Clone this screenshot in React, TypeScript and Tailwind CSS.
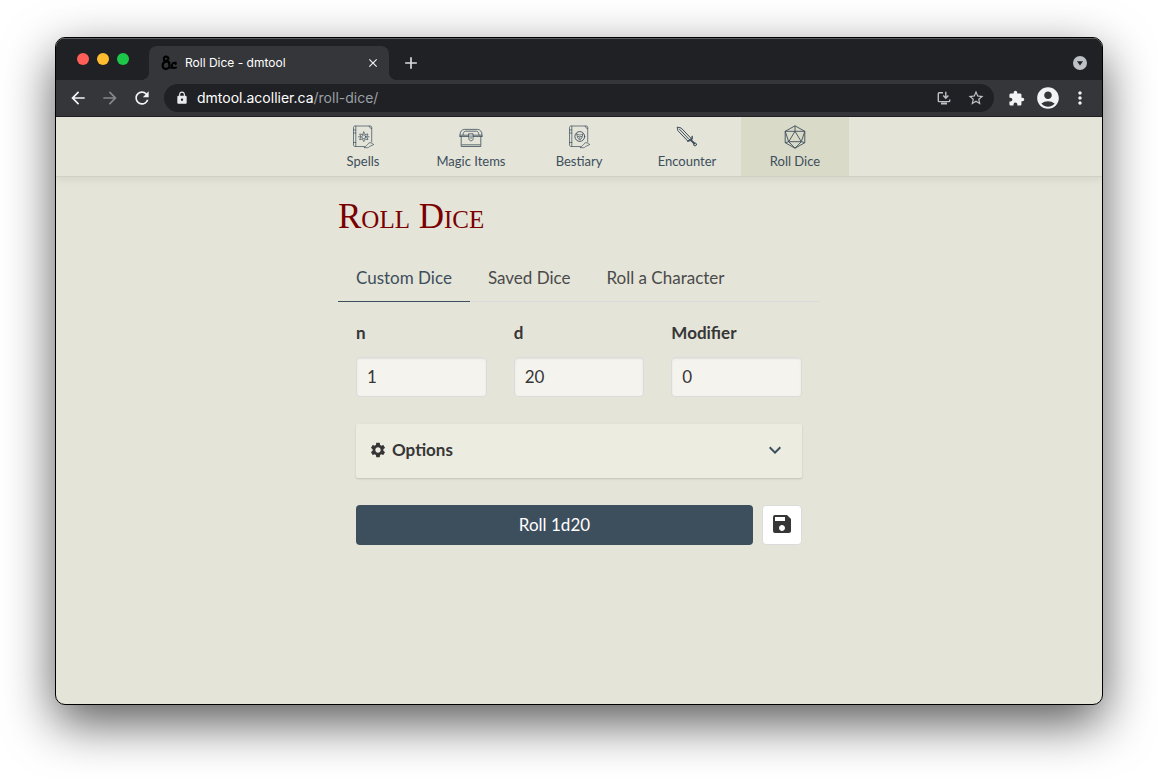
import { useState } from "react";
import type { ReactNode } from "react";
import {
  MdAccountCircle,
  MdAdd,
  MdArrowBack,
  MdArrowForward,
  MdClose,
  MdExpandMore,
  MdExtension,
  MdLock,
  MdMoreVert,
  MdRefresh,
  MdSave,
  MdSettings,
  MdStarBorder,
} from "react-icons/md";

function FaviconAmpersand() {
  return (
    <svg viewBox="0 0 16 16" className="h-4 w-4" fill="none" stroke="#000" strokeLinecap="round" strokeLinejoin="round" aria-hidden="true">
      <path strokeWidth="2.2" d="M3 4.600C2.300 2.600 3.700 1.500 5.300 1.600 7 1.700 7.800 3 7.200 4.400 6.700 5.600 5 6.300 3.700 7 2.200 7.800 1.400 9.400 1.700 11.200c.4 2.400 2.800 3.300 4.800 2.400 2.200-1 2.600-3.400 1.400-5" />
      <path strokeWidth="2" d="M3.200 5.200C5 6.600 7 6.400 8.500 7.600" />
      <path strokeWidth="2" d="M14.600 8.400C12.900 7.200 11 8.200 10.900 10.200c-.1 2.400 1.900 3.700 4.100 2.300M14.700 7.500v1.600" />
      <path strokeWidth="1.500" d="M8 12.500l3 .6" />
    </svg>
  );
}

function InstallIcon() {
  return (
    <svg viewBox="0 0 14 14" className="h-3.5 w-3.5" fill="none" stroke="currentColor" strokeWidth="1.4" aria-hidden="true">
      <path d="M6 1.700H2.200A.9.9 0 0 0 1.300 2.600v7.100c0 .5.4.9.9.9h9.600c.5 0 .9-.4.900-.9V8.500" />
      <path d="M8.800.8v6M6.200 4.600l2.600 2.600 2.600-2.600" />
      <path d="M4 12.400h6" strokeWidth="2" />
    </svg>
  );
}

function BookBase({ children }: { children: ReactNode }) {
  return (
    <svg viewBox="0 0 24 24" className="h-6 w-6" fill="none" stroke="currentColor" strokeWidth="0.7" strokeLinecap="round" strokeLinejoin="round" aria-hidden="true">
      <path d="M13.500 21.500H4.200c-1 0-1.700-.6-1.700-1.500V2.500c0-.9.6-1.500 1.500-1.500h15.400c.8 0 1.300.5 1.300 1.300v14.600" />
      <path d="M4.800 1.200v20.200M2.500 5h2.300M2.500 8h2.300M2.500 17.500h2.300" />
      <path d="M18.300 1.200c0 1.300.9 2.200 2.400 2.200" />
      <path d="M13.600 22.600c.6-1.500 1.500-1.600 2.300-2.300 1-.9 1.300-2.400 3-2.600 1.800-.2 2.200 1 3.900 1.800-1.500.4-2 1.300-3.300 1.500-1.200.2-1.300 1.500-2.700 1.700-1.200.2-2-.3-3.200-.1z" />
      {children}
    </svg>
  );
}

function SpellsIcon() {
  return (
    <BookBase>
      <path d="M12.800 7l1.300 2.500 2.900-.5-1.400 2.800 1.400 2.800-2.900-.5-1.300 2.500-1.300-2.500-2.900.5 1.400-2.800L8.600 9l2.900.5z" />
      <circle cx="12.800" cy="11.800" r="1.900" />
      <path d="M7.500 11.800h2.300M15.800 11.800h2.300" />
    </BookBase>
  );
}

function BestiaryIcon() {
  return (
    <BookBase>
      <circle cx="12.800" cy="11.500" r="4.900" strokeWidth="0.9" />
      <path d="M9.800 9c.6 1.300.2 2.800 1 4l2 2.200 2-2.200c.8-1.200.4-2.700 1-4-1.200.1-1.500 1-3 1s-1.800-.9-3-1zM11 11.500h1M13.600 11.500h1M12.800 12v1.600" />
    </BookBase>
  );
}

function ChestIcon() {
  return (
    <svg viewBox="0 0 24 24" className="h-6 w-6" fill="none" stroke="currentColor" strokeWidth="0.8" strokeLinecap="round" strokeLinejoin="round" aria-hidden="true">
      <path d="M1 11.500V10C1 6.700 2.800 4.400 5.500 4.400h13c2.700 0 4.500 2.300 4.500 5.600v1.500" />
      <path d="M2.200 11.500v10h19.600v-10M4 10c.2-2 1-3.800 2.300-3.800h11.400c1.300 0 2.100 1.800 2.300 3.800M3 19.800h18" />
      <path d="M1 10.200h9M14 10.200h9M1 11.500h9M14 11.500h9" />
      <path d="M9.900 8.800h4.200v4.900c0 1.300-.9 2.100-2.100 2.100s-2.100-.8-2.100-2.100zM12 10.800v2.700" />
    </svg>
  );
}

function SwordIcon() {
  return (
    <svg viewBox="0 0 24 24" className="h-6 w-6" fill="none" stroke="currentColor" strokeWidth="1" strokeLinecap="round" strokeLinejoin="round" aria-hidden="true">
      <path d="M2.500 2.200l3.700.8 9.700 10.200-3 3L3.200 6z" />
      <path d="M4.500 4.200l9.300 10" />
      <path strokeWidth="1.500" d="M17.200 11.600c.3 1.500-.1 2.300-1 3.200s-1.900 1.300-3.500 1.200" />
      <path strokeWidth="1.900" d="M16 15.200l3.300 3.300" />
      <circle cx="20" cy="19.400" r="1.500" />
    </svg>
  );
}

function D20Icon() {
  return (
    <svg viewBox="0 0 24 24" className="h-6 w-6" fill="none" stroke="currentColor" strokeWidth="0.9" strokeLinejoin="round" aria-hidden="true">
      <path d="M12 .8l9.800 5.500v11.400L12 23.200l-9.800-5.500V6.300z" />
      <path d="M12 6.300L5.700 16.700h12.600zM12 .8v5.500M2.200 6.300H21.800M2.200 6.300l3.500 10.400M21.800 6.300l-3.500 10.400M2.200 17.700l3.500-1M21.800 17.700l-3.500-1M5.700 16.700L12 23.200l6.300-6.500" />
    </svg>
  );
}

const navItems = [
  { label: "Spells", href: "#spells", icon: <SpellsIcon /> },
  { label: "Magic Items", href: "#magic-items", icon: <ChestIcon /> },
  { label: "Bestiary", href: "#bestiary", icon: <BestiaryIcon /> },
  { label: "Encounter", href: "#encounter", icon: <SwordIcon /> },
  { label: "Roll Dice", href: "#roll-dice", icon: <D20Icon /> },
];

const tabs = ["Custom Dice", "Saved Dice", "Roll a Character"];

function ToolButton({ label, children, className = "text-[#f1f3f4]" }: { label: string; children: ReactNode; className?: string }) {
  return (
    <button type="button" aria-label={label} className={`flex h-7 w-8 shrink-0 items-center justify-center ${className}`}>
      {children}
    </button>
  );
}

function TabStrip() {
  return (
    <div className="flex h-[42px] items-end border-t border-[#5a5b5e] bg-[#202124]">
      <div className="flex h-full items-center gap-2 pb-0.5 pl-[21px]">
        <button type="button" aria-label="Close window" className="h-3 w-3 rounded-full bg-[#ff5f57]" />
        <button type="button" aria-label="Minimize window" className="h-3 w-3 rounded-full bg-[#febc2e]" />
        <button type="button" aria-label="Zoom window" className="h-3 w-3 rounded-full bg-[#1dc749]" />
      </div>
      <div className="relative ml-5 flex h-[34px] w-60 items-center rounded-t-lg bg-[#35363a] pr-2 pl-3">
        <span className="absolute bottom-0 -left-2 h-2 w-2 bg-[radial-gradient(circle_at_top_left,#202124_8px,#35363a_8px)]" />
        <span className="absolute -right-2 bottom-0 h-2 w-2 bg-[radial-gradient(circle_at_top_right,#202124_8px,#35363a_8px)]" />
        <FaviconAmpersand />
        <span className="ml-2 flex-1 text-xs text-white">Roll Dice - dmtool</span>
        <button type="button" aria-label="Close tab" className="flex h-4 w-4 items-center justify-center text-[#f1f3f4]">
          <MdClose size={14} />
        </button>
      </div>
      <button type="button" aria-label="New tab" className="ml-3 flex h-[34px] w-5 items-center justify-center text-[#dadce0]">
        <MdAdd size={20} />
      </button>
      <button type="button" aria-label="Search tabs" className="mr-[15px] mb-[10px] ml-auto h-3.5 w-3.5 text-[#bdc1c6]">
        <svg viewBox="0 0 14 14" className="h-3.5 w-3.5" aria-hidden="true">
          <circle cx="7" cy="7" r="7" fill="currentColor" />
          <path d="M4 5.200h6L7 9.400z" fill="#202124" />
        </svg>
      </button>
    </div>
  );
}

function Toolbar() {
  return (
    <div className="flex h-[37px] items-center border-b border-[#202124] bg-[#35363a] px-1.5">
      <ToolButton label="Back"><MdArrowBack size={20} /></ToolButton>
      <ToolButton label="Forward" className="text-[#86878a]"><MdArrowForward size={20} /></ToolButton>
      <ToolButton label="Reload"><MdRefresh size={20} /></ToolButton>
      <div className="mx-1.5 flex h-7 min-w-0 flex-1 items-center rounded-full bg-[#202124] pr-0.5 pl-[11px] text-sm">
        <MdLock size={14} className="mr-2 shrink-0 text-[#e8eaed]" />
        <p className="flex-1 truncate text-[#9aa0a6]">
          <span className="text-white">dmtool.acollier.ca</span>/roll-dice/
        </p>
        <ToolButton label="Install app" className="text-[#bdc1c6]"><InstallIcon /></ToolButton>
        <ToolButton label="Bookmark" className="text-[#bdc1c6]"><MdStarBorder size={18} /></ToolButton>
      </div>
      <ToolButton label="Extensions"><MdExtension size={17} /></ToolButton>
      <ToolButton label="Profile"><MdAccountCircle size={26} /></ToolButton>
      <ToolButton label="Menu"><MdMoreVert size={20} /></ToolButton>
    </div>
  );
}

function NumberField({ id, label, value, onChange }: { id: string; label: string; value: string; onChange: (v: string) => void }) {
  return (
    <div className="min-w-0">
      <label htmlFor={id} className="mb-3 block leading-[25px] font-bold">{label}</label>
      <input
        id={id}
        type="text"
        inputMode="numeric"
        value={value}
        onChange={(e) => onChange(e.target.value)}
        className="block h-10 w-full rounded border border-[#dbdbdb] bg-[#f5f3ee] px-2.5 pb-0.5 shadow-[inset_0_1px_2px_rgba(10,10,10,0.08)] outline-none"
      />
    </div>
  );
}

export default function App() {
  const [n, setN] = useState("1");
  const [d, setD] = useState("20");
  const [modifier, setModifier] = useState("0");
  const [tab, setTab] = useState(tabs[0]);

  return (
    <div className="flex min-h-screen flex-col bg-white px-[55px] pt-[37px] pb-[73px]">
      <div className="flex flex-1 flex-col overflow-hidden rounded-[10px] border border-black bg-[#e4e4d8] shadow-[0_18px_50px_rgba(0,0,0,0.65)]">
        <header className="font-['Inter',sans-serif]">
          <TabStrip />
          <Toolbar />
        </header>

        <div className="font-['Lato',sans-serif] text-[17px] text-[#363636]">
          <nav className="flex h-[60px] justify-center border-b border-[#d0d0c4] shadow-[0_2px_8px_rgba(0,0,0,0.08)]">
            {navItems.map((item) => (
              <a
                key={item.label}
                href={item.href}
                className={`flex w-[108px] flex-col items-center gap-[3px] pt-2 text-[13px] leading-[18px] text-[#3d4e5c] ${item.label === "Roll Dice" ? "bg-[#d9dac7]" : ""}`}
              >
                {item.icon}
                {item.label}
              </a>
            ))}
          </nav>

          <main className="mx-auto max-w-[482px] pt-5">
            <h1 className="mb-5 font-['Liberation_Serif',serif] text-[35px] leading-10 text-[#7a0000] [font-variant-caps:small-caps]">Roll Dice</h1>

            <div role="tablist" className="flex border-b border-[#dbdbdb]">
              {tabs.map((t) => (
                <button
                  key={t}
                  type="button"
                  role="tab"
                  aria-selected={t === tab}
                  onClick={() => setTab(t)}
                  className={`-mb-px h-[45px] border-b px-[18px] pb-0.5 ${t === tab ? "border-[#3d4e5c] text-[#3d4e5c]" : "border-transparent text-[#4a4a4a]"}`}
                >
                  {t}
                </button>
              ))}
            </div>

            <form className="flex flex-col gap-[27px] p-[18px]" onSubmit={(e) => e.preventDefault()}>
              <div className="grid grid-cols-3 gap-[27px]">
                <NumberField id="dice-count" label="n" value={n} onChange={setN} />
                <NumberField id="dice-sides" label="d" value={d} onChange={setD} />
                <NumberField id="dice-modifier" label="Modifier" value={modifier} onChange={setModifier} />
              </div>

              <button
                type="button"
                aria-expanded="false"
                className="flex h-[54px] items-center rounded-xs bg-[#ecece1] pr-[15px] pb-0.5 pl-[13px] font-bold shadow-[0_1px_2px_rgba(10,10,10,0.16)]"
              >
                <MdSettings size={18} className="mr-[5px]" />
                Options
                <MdExpandMore size={24} className="ml-auto text-[#3d4e5c]" />
              </button>

              <div className="flex gap-[9px]">
                <button type="submit" className="h-10 flex-1 rounded bg-[#3d4e5c] text-white">
                  Roll {n}d{d}
                </button>
                <button type="button" aria-label="Save dice" className="flex h-10 w-10 items-center justify-center rounded border border-[#dbdbdb] bg-white pb-0.5">
                  <MdSave size={24} />
                </button>
              </div>
            </form>
          </main>
        </div>
      </div>
    </div>
  );
}
